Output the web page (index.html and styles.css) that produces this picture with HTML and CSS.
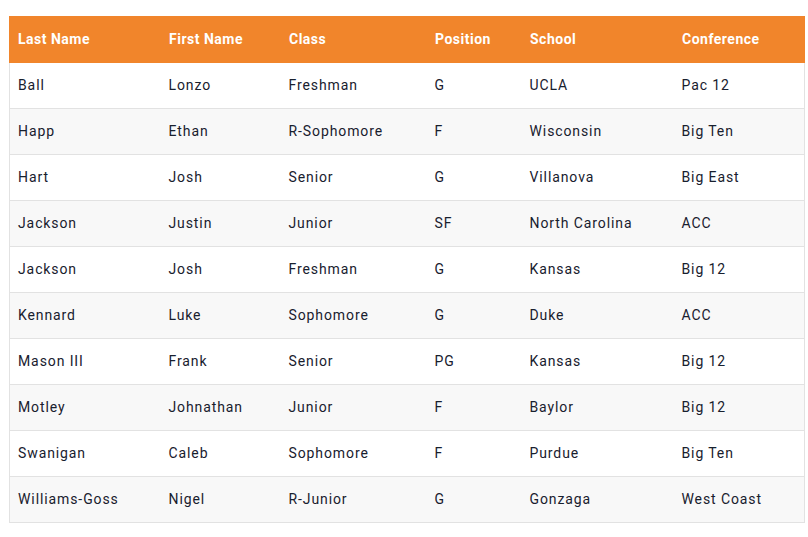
FILE: index.html
```html
<!DOCTYPE html>
<html>
<head>
<meta charset="utf-8">
<link rel="stylesheet" href="styles.css">
</head>
<body>
<div class="wrap">
<table class="roster">
<thead>
<tr><th class="c1">Last Name</th><th class="c2">First Name</th><th class="c3">Class</th><th class="c4">Position</th><th class="c5">School</th><th class="c6">Conference</th></tr>
</thead>
<tbody>
<tr><td>Ball</td><td>Lonzo</td><td>Freshman</td><td>G</td><td>UCLA</td><td>Pac 12</td></tr>
<tr><td>Happ</td><td>Ethan</td><td>R-Sophomore</td><td>F</td><td>Wisconsin</td><td>Big Ten</td></tr>
<tr><td>Hart</td><td>Josh</td><td>Senior</td><td>G</td><td>Villanova</td><td>Big East</td></tr>
<tr><td>Jackson</td><td>Justin</td><td>Junior</td><td>SF</td><td>North Carolina</td><td>ACC</td></tr>
<tr><td>Jackson</td><td>Josh</td><td>Freshman</td><td>G</td><td>Kansas</td><td>Big 12</td></tr>
<tr><td>Kennard</td><td>Luke</td><td>Sophomore</td><td>G</td><td>Duke</td><td>ACC</td></tr>
<tr><td>Mason III</td><td>Frank</td><td>Senior</td><td>PG</td><td>Kansas</td><td>Big 12</td></tr>
<tr><td>Motley</td><td>Johnathan</td><td>Junior</td><td>F</td><td>Baylor</td><td>Big 12</td></tr>
<tr><td>Swanigan</td><td>Caleb</td><td>Sophomore</td><td>F</td><td>Purdue</td><td>Big Ten</td></tr>
<tr><td>Williams-Goss</td><td>Nigel</td><td>R-Junior</td><td>G</td><td>Gonzaga</td><td>West Coast</td></tr>
</tbody>
</table>
</div>
</body>
</html>
```
FILE: styles.css
```css
html, body {
  margin: 0;
  padding: 0;
  background: #ffffff;
}
.wrap {
  padding: 16px 4px 0 9px;
}
.roster {
  width: 795px;
  border-collapse: collapse;
  table-layout: fixed;
  font-family: Roboto, "Liberation Sans", sans-serif;
  font-size: 14px;
  font-weight: 400;
  letter-spacing: 0.9px;
  color: #18202e;
}
.roster th {
  background: #f1852b;
  color: #ffffff;
  font-weight: 700;
  letter-spacing: 0.5px;
  text-align: left;
  height: 46px;
  padding: 0 0 2px 8px;
  border: 1px solid #f1852b;
  box-sizing: border-box;
}
.c1 { width: 151px; }
.c2 { width: 120px; }
.c3 { width: 146px; }
.c4 { width: 95px; }
.c5 { width: 152px; }
.c6 { width: 131px; }
.roster td {
  height: 46px;
  padding: 0 0 2px 8px;
  border-top: 1px solid #e2e2e2;
  border-bottom: 1px solid #e2e2e2;
  box-sizing: border-box;
}
.roster td:first-child { border-left: 1px solid #e2e2e2; }
.roster td:last-child { border-right: 1px solid #e2e2e2; }
.roster tbody tr:nth-child(even) td {
  background: #f8f8f8;
}
```
